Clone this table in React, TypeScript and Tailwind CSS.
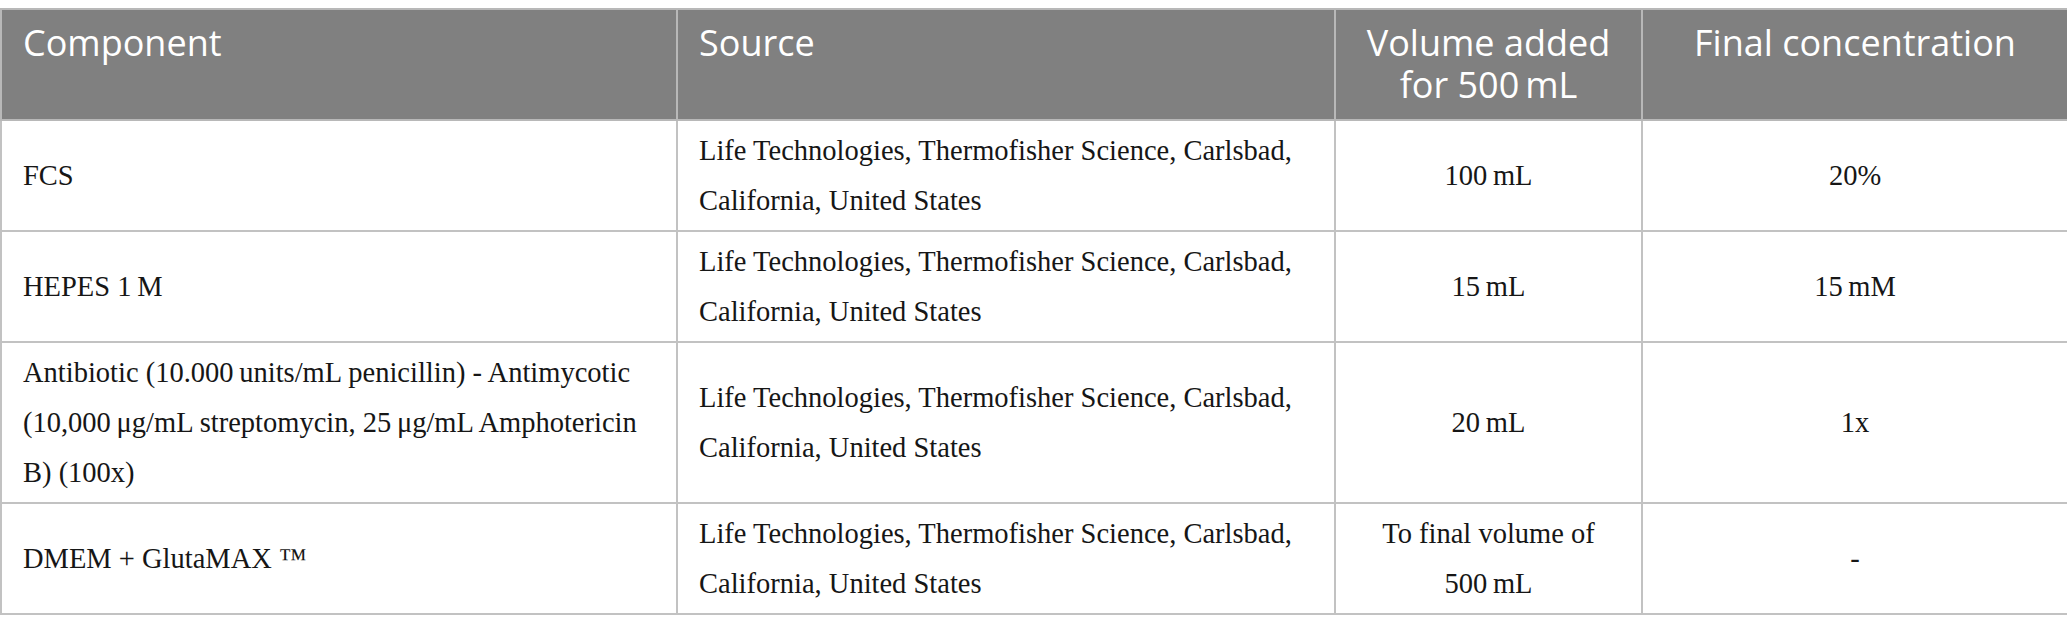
import React from 'react';

type Row = {
  component: string;
  source: string;
  volume: string;
  concentration: string;
};

const source = 'Life Technologies, Thermofisher Science, Carlsbad, California, United States';

const rows: Row[] = [
  { component: 'FCS', source, volume: '100\u2009mL', concentration: '20%' },
  { component: 'HEPES 1\u2009M', source, volume: '15\u2009mL', concentration: '15\u2009mM' },
  {
    component:
      'Antibiotic (10.000\u2009units/mL penicillin) - Antimycotic (10,000\u2009μg/mL streptomycin, 25\u2009μg/mL Amphotericin B) (100x)',
    source,
    volume: '20\u2009mL',
    concentration: '1x',
  },
  { component: 'DMEM + GlutaMAX ™', source, volume: 'To final volume of 500\u2009mL', concentration: '-' },
];

const App: React.FC = () => {
  return (
    <div className="w-[2067px] min-h-[633px] bg-white pt-[8px]">
      <table className="w-[2067px] table-fixed border-collapse">
        <colgroup>
          <col className="w-[676px]" />
          <col className="w-[658px]" />
          <col className="w-[307px]" />
          <col className="w-[426px]" />
        </colgroup>
        <thead>
          <tr className="bg-[#808080] text-white font-['Open_Sans',sans-serif] text-[36px] leading-[42px]">
            <th className="border-2 border-[#b8b8b8] px-[21px] pt-[12px] pb-[13px] text-left align-top font-normal">
              Component
            </th>
            <th className="border-2 border-[#b8b8b8] px-[21px] pt-[12px] pb-[13px] text-left align-top font-normal">
              Source
            </th>
            <th className="border-2 border-[#b8b8b8] px-[21px] pt-[12px] pb-[13px] text-center align-top font-normal">
              Volume added for 500&#8201;mL
            </th>
            <th className="border-2 border-[#b8b8b8] px-[21px] pt-[12px] pb-[13px] text-center align-top font-normal">
              Final concentration
            </th>
          </tr>
        </thead>
        <tbody className="font-['Liberation_Serif',serif] text-[28.5px] leading-[50px] text-[#161616]">
          {rows.map((row) => (
            <tr key={row.component}>
              <td className="border-2 border-[#c2c2c2] px-[21px] pt-[5px] pb-[4px] align-middle">
                {row.component}
              </td>
              <td className="border-2 border-[#c2c2c2] px-[21px] pt-[5px] pb-[4px] align-middle">
                {row.source}
              </td>
              <td className="border-2 border-[#c2c2c2] px-[21px] pt-[5px] pb-[4px] align-middle text-center">
                {row.volume}
              </td>
              <td className="border-2 border-[#c2c2c2] px-[21px] pt-[5px] pb-[4px] align-middle text-center">
                {row.concentration}
              </td>
            </tr>
          ))}
        </tbody>
      </table>
    </div>
  );
};

export default App;
